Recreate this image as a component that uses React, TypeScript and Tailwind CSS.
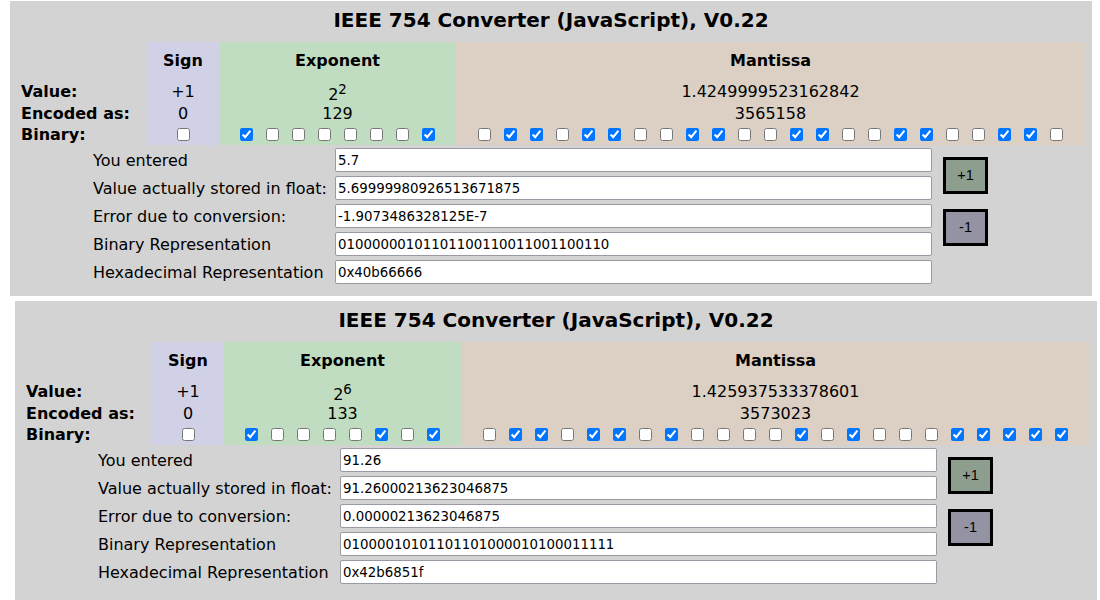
import React from "react";

type PanelData = {
  expPow: string;
  mantissaValue: string;
  expEncoded: string;
  mantEncoded: string;
  bits: string;
  entered: string;
  stored: string;
  error: string;
  hex: string;
};

const d1: PanelData = {
  expPow: "2",
  mantissaValue: "1.4249999523162842",
  expEncoded: "129",
  mantEncoded: "3565158",
  bits: "01000000101101100110011001100110",
  entered: "5.7",
  stored: "5.69999980926513671875",
  error: "-1.9073486328125E-7",
  hex: "0x40b66666",
};

const d2: PanelData = {
  expPow: "6",
  mantissaValue: "1.425937533378601",
  expEncoded: "133",
  mantEncoded: "3573023",
  bits: "01000010101101101000010100011111",
  entered: "91.26",
  stored: "91.26000213623046875",
  error: "0.00000213623046875",
  hex: "0x42b6851f",
};

function Boxes({ bits }: { bits: string }) {
  return (
    <div className="flex justify-center items-center gap-[13px]">
      {bits.split("").map((b, i) => (
        <input
          key={i}
          type="checkbox"
          defaultChecked={b === "1"}
          className="m-0 w-[13px] h-[13px] shrink-0"
        />
      ))}
    </div>
  );
}

function Panel({ d, className }: { d: PanelData; className: string }) {
  const sign = d.bits.slice(0, 1);
  const exp = d.bits.slice(1, 9);
  const mant = d.bits.slice(9);
  const rows: [string, string][] = [
    ["You entered", d.entered],
    ["Value actually stored in float:", d.stored],
    ["Error due to conversion:", d.error],
    ["Binary Representation", d.bits],
    ["Hexadecimal Representation", d.hex],
  ];
  return (
    <div className={"bg-[#d3d3d3] flex flex-col text-black " + className}>
      <div className="h-[41px] pb-[4px] flex items-center justify-center text-[20px] font-bold leading-none">
        IEEE 754 Converter (JavaScript), V0.22
      </div>
      <div className="flex text-[16px]">
        <div className="w-[137px] flex flex-col font-bold pl-[11px]">
          <div className="h-[38px]" />
          <div className="h-[23px] flex items-center">Value:</div>
          <div className="h-[21px] flex items-center">Encoded as:</div>
          <div className="h-[21px] flex items-center">Binary:</div>
        </div>
        <div className="w-[72px] flex flex-col bg-[#d0d1e6]">
          <div className="h-[38px] flex items-center justify-center font-bold">Sign</div>
          <div className="h-[23px] flex items-center justify-center">+1</div>
          <div className="h-[21px] flex items-center justify-center">0</div>
          <div className="h-[21px] flex items-center justify-center">
            <Boxes bits={sign} />
          </div>
        </div>
        <div className="w-[237px] flex flex-col bg-[#c1ddc1]">
          <div className="h-[38px] flex items-center justify-center font-bold">Exponent</div>
          <div className="h-[23px] flex items-center justify-center">
            <span className="relative top-[3px]">
              2
              <span className="relative -top-[6px] text-[13.33px]">{d.expPow}</span>
            </span>
          </div>
          <div className="h-[21px] flex items-center justify-center">{d.expEncoded}</div>
          <div className="h-[21px] flex items-center justify-center">
            <Boxes bits={exp} />
          </div>
        </div>
        <div className="w-[629px] flex flex-col bg-[#dcd0c5]">
          <div className="h-[38px] flex items-center justify-center font-bold">Mantissa</div>
          <div className="h-[23px] flex items-center justify-center">{d.mantissaValue}</div>
          <div className="h-[21px] flex items-center justify-center">{d.mantEncoded}</div>
          <div className="h-[21px] flex items-center justify-center">
            <Boxes bits={mant} />
          </div>
        </div>
      </div>
      <div className="flex pt-[3px] pl-[83px]">
        <div className="flex flex-col gap-[4px]">
          {rows.map(([label, val]) => (
            <div key={label} className="flex items-center h-[24px]">
              <div className="w-[242px] text-[16px] whitespace-nowrap pt-px">{label}</div>
              <input
                readOnly
                value={val}
                className="w-[597px] h-[24px] bg-white border border-[#9a9aa4] rounded-[2px] px-[2px] text-[13.33px] text-black outline-none"
                style={{ fontFamily: '"DejaVu Sans", sans-serif' }}
              />
            </div>
          ))}
        </div>
        <div className="flex flex-col pl-[11px] pt-[9px] gap-[15px]">
          <button className="w-[45px] h-[37px] border-[3px] border-black bg-[#8e9e8e] text-[14.5px] text-black flex items-center justify-center" style={{ fontFamily: '"Liberation Sans", Arial, sans-serif' }}>
            +1
          </button>
          <button className="w-[45px] h-[37px] border-[3px] border-black bg-[#9393a3] text-[14.5px] text-black flex items-center justify-center" style={{ fontFamily: '"Liberation Sans", Arial, sans-serif' }}>
            -1
          </button>
        </div>
      </div>
    </div>
  );
}

export default function App() {
  return (
    <div
      className="w-[1100px] h-[600px] overflow-hidden bg-white pt-px"
      style={{ fontFamily: '"DejaVu Sans", sans-serif' }}
    >
      <Panel d={d1} className="ml-[10px] w-[1082px] h-[295px]" />
      <Panel d={d2} className="ml-[15px] mt-[5px] w-[1082px] h-[300px]" />
    </div>
  );
}
